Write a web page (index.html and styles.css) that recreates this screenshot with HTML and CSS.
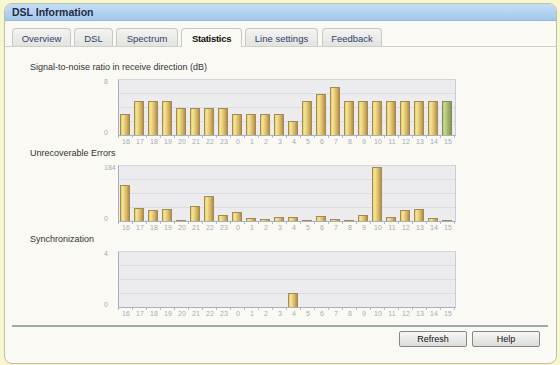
FILE: index.html
```html
<!DOCTYPE html>
<html>
<head>
<meta charset="utf-8">
<link rel="stylesheet" href="styles.css">
</head>
<body>
<div class="panel">
  <div class="titlebar">DSL Information</div>
  <div class="tabs">
    <div class="tab t-overview">Overview</div>
    <div class="tab t-dsl">DSL</div>
    <div class="tab t-spectrum">Spectrum</div>
    <div class="tab t-stats active">Statistics</div>
    <div class="tab t-line">Line settings</div>
    <div class="tab t-feedback">Feedback</div>
  </div>
  <div class="content">
    <div class="section">
      <div class="section-title">Signal-to-noise ratio in receive direction (dB)</div>
      <div class="chart">
        <div class="yaxis"><span>8</span><span>0</span></div>
        <div class="col">
          <div class="plot">
            <div class="bars">
              <div class="bar" style="height:37.5%"></div>
              <div class="bar" style="height:62.5%"></div>
              <div class="bar" style="height:62.5%"></div>
              <div class="bar" style="height:62.5%"></div>
              <div class="bar" style="height:50%"></div>
              <div class="bar" style="height:50%"></div>
              <div class="bar" style="height:50%"></div>
              <div class="bar" style="height:50%"></div>
              <div class="bar" style="height:37.5%"></div>
              <div class="bar" style="height:37.5%"></div>
              <div class="bar" style="height:37.5%"></div>
              <div class="bar" style="height:37.5%"></div>
              <div class="bar" style="height:25%"></div>
              <div class="bar" style="height:62.5%"></div>
              <div class="bar" style="height:75%"></div>
              <div class="bar" style="height:87.5%"></div>
              <div class="bar" style="height:62.5%"></div>
              <div class="bar" style="height:62.5%"></div>
              <div class="bar" style="height:62.5%"></div>
              <div class="bar" style="height:62.5%"></div>
              <div class="bar" style="height:62.5%"></div>
              <div class="bar" style="height:62.5%"></div>
              <div class="bar" style="height:62.5%"></div>
              <div class="bar current" style="height:62.5%"></div>
            </div>
          </div>
          <div class="xlabels"><span>16</span><span>17</span><span>18</span><span>19</span><span>20</span><span>21</span><span>22</span><span>23</span><span>0</span><span>1</span><span>2</span><span>3</span><span>4</span><span>5</span><span>6</span><span>7</span><span>8</span><span>9</span><span>10</span><span>11</span><span>12</span><span>13</span><span>14</span><span>15</span></div>
        </div>
      </div>
    </div>

    <div class="section">
      <div class="section-title">Unrecoverable Errors</div>
      <div class="chart">
        <div class="yaxis"><span>184</span><span>0</span></div>
        <div class="col">
          <div class="plot">
            <div class="bars">
              <div class="bar" style="height:66%"></div>
              <div class="bar" style="height:23%"></div>
              <div class="bar" style="height:20%"></div>
              <div class="bar" style="height:21%"></div>
              <div class="bar" style="height:2%"></div>
              <div class="bar" style="height:27%"></div>
              <div class="bar" style="height:45%"></div>
              <div class="bar" style="height:11%"></div>
              <div class="bar" style="height:16%"></div>
              <div class="bar" style="height:5.5%"></div>
              <div class="bar" style="height:4%"></div>
              <div class="bar" style="height:7%"></div>
              <div class="bar" style="height:7%"></div>
              <div class="bar" style="height:2%"></div>
              <div class="bar" style="height:9%"></div>
              <div class="bar" style="height:3%"></div>
              <div class="bar" style="height:2%"></div>
              <div class="bar" style="height:11%"></div>
              <div class="bar" style="height:98%"></div>
              <div class="bar" style="height:7%"></div>
              <div class="bar" style="height:20%"></div>
              <div class="bar" style="height:21%"></div>
              <div class="bar" style="height:5.5%"></div>
              <div class="bar" style="height:2%"></div>
            </div>
          </div>
          <div class="xlabels"><span>16</span><span>17</span><span>18</span><span>19</span><span>20</span><span>21</span><span>22</span><span>23</span><span>0</span><span>1</span><span>2</span><span>3</span><span>4</span><span>5</span><span>6</span><span>7</span><span>8</span><span>9</span><span>10</span><span>11</span><span>12</span><span>13</span><span>14</span><span>15</span></div>
        </div>
      </div>
    </div>

    <div class="section">
      <div class="section-title">Synchronization</div>
      <div class="chart">
        <div class="yaxis"><span>4</span><span>0</span></div>
        <div class="col">
          <div class="plot">
            <div class="bars">
              <div class="bar empty"></div>
              <div class="bar empty"></div>
              <div class="bar empty"></div>
              <div class="bar empty"></div>
              <div class="bar empty"></div>
              <div class="bar empty"></div>
              <div class="bar empty"></div>
              <div class="bar empty"></div>
              <div class="bar empty"></div>
              <div class="bar empty"></div>
              <div class="bar empty"></div>
              <div class="bar empty"></div>
              <div class="bar" style="height:25%"></div>
            </div>
          </div>
          <div class="xlabels"><span>16</span><span>17</span><span>18</span><span>19</span><span>20</span><span>21</span><span>22</span><span>23</span><span>0</span><span>1</span><span>2</span><span>3</span><span>4</span><span>5</span><span>6</span><span>7</span><span>8</span><span>9</span><span>10</span><span>11</span><span>12</span><span>13</span><span>14</span><span>15</span></div>
        </div>
      </div>
    </div>
  </div>
  <div class="separator"></div>
  <div class="buttons">
    <button class="btn">Refresh</button>
    <button class="btn">Help</button>
  </div>
</div>
</body>
</html>
```

FILE: styles.css
```css
html, body {
  margin: 0;
  padding: 0;
}
body {
  background: #f8f6cc;
  font-family: "Liberation Sans", Arial, sans-serif;
  padding: 3px 0 0 4px;
  height: 365px;
  box-sizing: border-box;
  overflow: hidden;
}
.panel {
  width: 553px;
  height: 361px;
  box-sizing: border-box;
  background: #faf9f4;
  border: 1px solid #b9c2ad;
  border-radius: 8px;
  overflow: hidden;
  display: flex;
  flex-direction: column;
}
.titlebar {
  height: 16px;
  line-height: 16px;
  padding-left: 7px;
  background: linear-gradient(to bottom, #c6def5, #a2c7ec);
  border-bottom: 1px solid #96b6d2;
  font-size: 10.5px;
  font-weight: bold;
  color: #1e2b46;
}
.tabs {
  margin-top: 7px;
  padding-left: 7px;
  display: flex;
  gap: 3px;
  border-bottom: 1px solid #cdcfc8;
  align-items: flex-end;
}
.tab {
  height: 18px;
  line-height: 19px;
  box-sizing: border-box;
  flex: none;
  text-align: center;
  white-space: nowrap;
  font-size: 9.5px;
  color: #2f4268;
  background: linear-gradient(to bottom, #f3f3f1, #e3e3e1);
  border: 1px solid #c6c8c2;
  border-bottom: none;
  border-radius: 4px 4px 0 0;
}
.t-overview { width: 59px; }
.t-dsl { width: 39px; }
.t-spectrum { width: 62px; }
.t-stats { width: 61px; }
.t-line { width: 73px; }
.t-feedback { width: 60px; margin-left: 1px; }
.tab.active {
  background: #faf9f4;
  color: #111;
  font-weight: bold;
  letter-spacing: -0.3px;
  height: 19px;
  margin-bottom: -1px;
}
.content {
  padding: 13px 0 0 25px;
}
.section-title {
  font-size: 9px;
  line-height: 14px;
  color: #333;
}
.chart {
  display: flex;
  margin-top: 5px;
  padding-left: 74px;
}
.yaxis {
  width: 14px;
  height: 61px;
  margin: -2px 0 -2px;
  display: flex;
  flex-direction: column;
  justify-content: space-between;
  font-size: 7px;
  line-height: 10px;
  color: #a4abb8;
}
.col {
  display: flex;
  flex-direction: column;
}
.plot {
  width: 336px;
  height: 55px;
  background-color: #ececef;
  background-image: repeating-linear-gradient(to bottom, transparent 0 13px, #d9dce3 13px 14px);
  border-top: 1px solid #d3d7df;
  border-right: 1px solid #c8ccd6;
  border-left: 1px solid #a9afbb;
  border-bottom: 1px solid #a9afbb;
}
.bars {
  height: 100%;
  display: flex;
  align-items: flex-end;
  gap: 4px;
  padding-left: 1px;
}
.bar {
  width: 10px;
  flex: none;
  box-sizing: border-box;
  background: linear-gradient(to right, #e4cc74, #f4e692 22%, #dcbd6a 62%, #b88f48);
  border: 1px solid #a28a56;
  border-bottom: none;
}
.bar.empty {
  height: 0;
  border: none;
}
.bar.current {
  background: linear-gradient(to right, #b6c67a, #c8d58c 22%, #a2b46a 62%, #869c50);
  border-color: #7c8c5a;
}
.xlabels {
  display: flex;
  padding-left: 1px;
  height: 10px;
  line-height: 11px;
  font-size: 7px;
  color: #a4abb8;
  background-image: repeating-linear-gradient(to right, #b4bac6 0 1px, transparent 1px 14px);
  background-size: 100% 2px;
  background-repeat: no-repeat;
}
.xlabels span {
  width: 14px;
  flex: none;
  text-align: center;
}
.separator {
  margin: 7px 8px 0 7px;
  height: 2px;
  background: #9aabab;
}
.buttons {
  margin-top: 4px;
  padding-right: 16px;
  display: flex;
  justify-content: flex-end;
  gap: 5px;
}
.btn {
  width: 68px;
  height: 16px;
  padding: 0;
  font-family: "Liberation Sans", Arial, sans-serif;
  font-size: 9px;
  color: #111;
  background: linear-gradient(to bottom, #f7f7f6, #dcdcda);
  border: 1px solid #868886;
  border-radius: 2px;
}
```
